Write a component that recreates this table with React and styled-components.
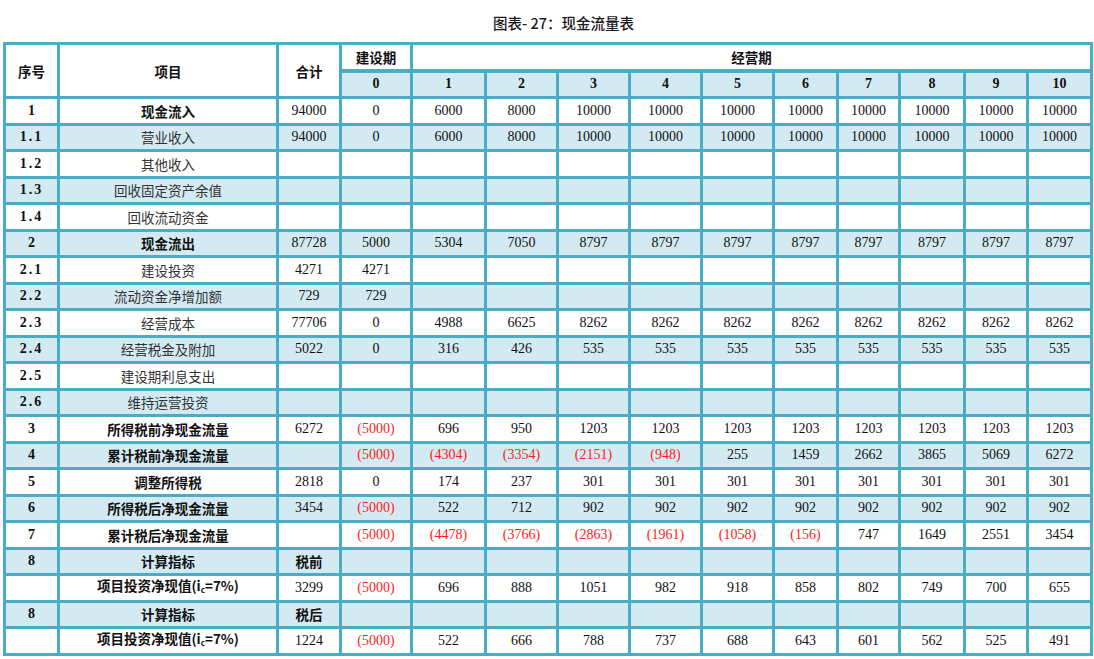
import React from "react"
import styled, { createGlobalStyle } from "styled-components"

const GlobalStyle = createGlobalStyle`
  html, body {
    margin: 0;
    padding: 0;
    background: #ffffff;
  }
  body {
    font-family: "Liberation Serif", "Noto Sans CJK SC", serif;
    color: #000;
  }
`

const LINE = "#4bacc6"
const SHADE = "#d3eaf2"

const Page = styled.div`
  width: 1094px;
  padding: 13px 0 0 3px;
  box-sizing: border-box;
`

const Title = styled.h1`
  margin: 0 0 9px 0;
  padding-left: 30px;
  height: 20px;
  line-height: 20px;
  text-align: center;
  font-size: 14.5px;
  font-weight: 500;
  font-family: "Noto Sans CJK SC", sans-serif;
  color: #1a1a1a;
`

const Table = styled.table`
  border-collapse: collapse;
  table-layout: fixed;
  width: 1087px;
  border: 3px solid ${LINE};
`

const Cell = styled.td`
  border: 3px solid ${LINE};
  background: ${p => (p.$shaded ? SHADE : "#ffffff")};
  height: 23.5px;
  padding: 0;
  text-align: center;
  vertical-align: middle;
  font-size: 14px;
  line-height: 16px;
  color: ${p => (p.$neg ? "#ff1a1a" : "#111")};
  white-space: nowrap;
  overflow: hidden;
`

const HeadCell = styled(Cell).attrs({ as: "th" })`
  font-family: "Noto Sans CJK SC", sans-serif;
  font-weight: 700;
  font-size: 13.5px;
  color: #111;
  border-bottom-width: ${p => (p.$thick ? "4px" : "3px")};
`

const NumHead = styled(Cell).attrs({ as: "th" })`
  font-family: "Liberation Serif", serif;
  font-weight: 700;
  font-size: 14px;
`

const NoCell = styled(Cell)`
  font-weight: 700;
  font-size: 14px;
  letter-spacing: ${p => (p.$sub ? "2px" : "0")};
`

const NameCell = styled(Cell)`
  font-family: "Noto Sans CJK SC", sans-serif;
  font-size: 13.5px;
  font-weight: ${p => (p.$bold ? 700 : 400)};
  color: ${p => (p.$bold ? "#111" : "#333")};

  sub {
    font-size: 8px;
    vertical-align: -2px;
  }
`

const TagCell = styled(Cell)`
  font-family: "Noto Sans CJK SC", sans-serif;
  font-size: 13.5px;
  font-weight: 700;
`

const widths = [54, 219, 63, 71, 74, 72, 72, 72, 72, 64, 62, 65, 63, 64]

const rep = (v, n) => Array(n).fill(v)
const npv = (
  <>
    项目投资净现值(i<sub>c</sub>=7%)
  </>
)

const rows = [
  { no: "1", name: "现金流入", bold: true, total: 94000, vals: [0, 6000, 8000, ...rep(10000, 8)] },
  { no: "1.1", name: "营业收入", total: 94000, vals: [0, 6000, 8000, ...rep(10000, 8)] },
  { no: "1.2", name: "其他收入", vals: [] },
  { no: "1.3", name: "回收固定资产余值", vals: [] },
  { no: "1.4", name: "回收流动资金", vals: [] },
  { no: "2", name: "现金流出", bold: true, total: 87728, vals: [5000, 5304, 7050, ...rep(8797, 8)] },
  { no: "2.1", name: "建设投资", total: 4271, vals: [4271] },
  { no: "2.2", name: "流动资金净增加额", total: 729, vals: [729] },
  { no: "2.3", name: "经营成本", total: 77706, vals: [0, 4988, 6625, ...rep(8262, 8)] },
  { no: "2.4", name: "经营税金及附加", total: 5022, vals: [0, 316, 426, ...rep(535, 8)] },
  { no: "2.5", name: "建设期利息支出", vals: [] },
  { no: "2.6", name: "维持运营投资", vals: [] },
  { no: "3", name: "所得税前净现金流量", bold: true, total: 6272, vals: [-5000, 696, 950, ...rep(1203, 8)] },
  { no: "4", name: "累计税前净现金流量", bold: true, vals: [-5000, -4304, -3354, -2151, -948, 255, 1459, 2662, 3865, 5069, 6272] },
  { no: "5", name: "调整所得税", bold: true, total: 2818, vals: [0, 174, 237, ...rep(301, 8)] },
  { no: "6", name: "所得税后净现金流量", bold: true, total: 3454, vals: [-5000, 522, 712, ...rep(902, 8)] },
  { no: "7", name: "累计税后净现金流量", bold: true, vals: [-5000, -4478, -3766, -2863, -1961, -1058, -156, 747, 1649, 2551, 3454] },
  { no: "8", name: "计算指标", bold: true, tag: "税前", vals: [] },
  { no: "", name: npv, bold: true, total: 3299, vals: [-5000, 696, 888, 1051, 982, 918, 858, 802, 749, 700, 655] },
  { no: "8", name: "计算指标", bold: true, tag: "税后", vals: [] },
  { no: "", name: npv, bold: true, total: 1224, vals: [-5000, 522, 666, 788, 737, 688, 643, 601, 562, 525, 491] },
]

const fmt = v => (v === undefined || v === "" ? "" : v < 0 ? `(${-v})` : String(v))

const App = () => {
  return (
    <>
      <GlobalStyle />
      <Page>
        <Title>图表- 27：现金流量表</Title>
        <Table>
          <colgroup>
            {widths.map((w, i) => (
              <col key={i} style={{ width: w }} />
            ))}
          </colgroup>
          <thead>
            <tr>
              <HeadCell rowSpan={2}>序号</HeadCell>
              <HeadCell rowSpan={2}>项目</HeadCell>
              <HeadCell rowSpan={2}>合计</HeadCell>
              <HeadCell $thick>建设期</HeadCell>
              <HeadCell $thick colSpan={10}>经营期</HeadCell>
            </tr>
            <tr>
              {Array.from({ length: 11 }, (_, i) => (
                <NumHead key={i} $shaded>
                  {i}
                </NumHead>
              ))}
            </tr>
          </thead>
          <tbody>
            {rows.map((r, idx) => {
              const shaded = idx % 2 === 1
              return (
                <tr key={idx}>
                  <NoCell $shaded={shaded} $sub={r.no.includes(".")}>
                    {r.no}
                  </NoCell>
                  <NameCell $shaded={shaded} $bold={r.bold}>
                    {r.name}
                  </NameCell>
                  {r.tag ? (
                    <TagCell $shaded={shaded}>{r.tag}</TagCell>
                  ) : (
                    <Cell $shaded={shaded}>{fmt(r.total)}</Cell>
                  )}
                  {Array.from({ length: 11 }, (_, i) => (
                    <Cell key={i} $shaded={shaded} $neg={r.vals[i] < 0}>
                      {fmt(r.vals[i])}
                    </Cell>
                  ))}
                </tr>
              )
            })}
          </tbody>
        </Table>
      </Page>
    </>
  )
}

export default App
